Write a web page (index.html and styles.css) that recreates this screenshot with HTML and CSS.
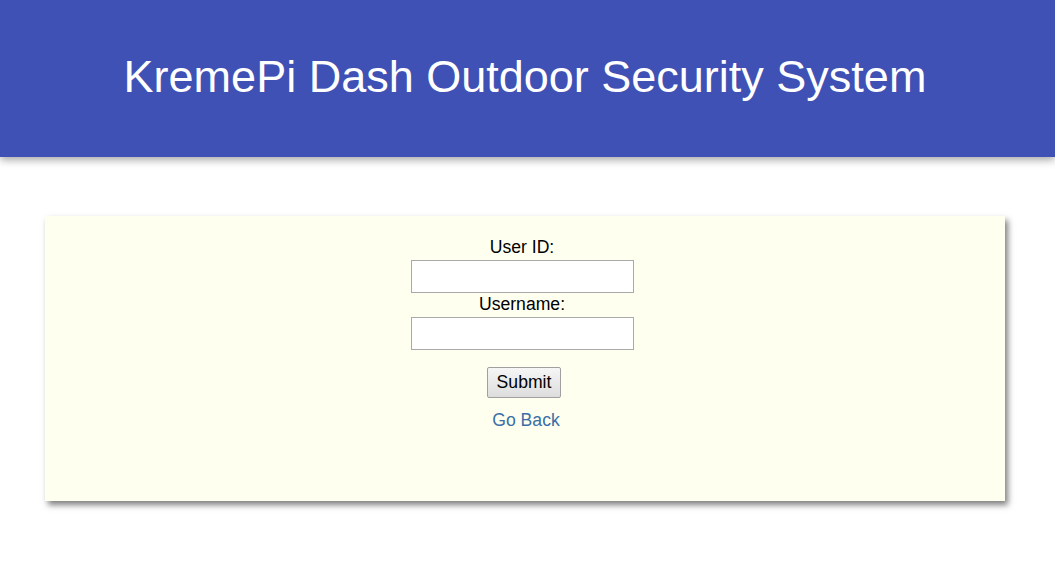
FILE: index.html
```html
<!DOCTYPE html>
<html>
<head>
<meta charset="utf-8">
<link rel="stylesheet" href="styles.css">
</head>
<body>
<header class="topbar">
  <h1 class="title">KremePi Dash Outdoor Security System</h1>
</header>
<main class="content">
  <section class="card">
    <form class="form">
      <label class="label" for="uid">User ID:</label>
      <input class="field" id="uid" type="text">
      <label class="label" for="uname">Username:</label>
      <input class="field" id="uname" type="text">
      <button class="submit" type="button">Submit</button>
      <a class="back" href="#">Go Back</a>
    </form>
  </section>
</main>
</body>
</html>
```
FILE: styles.css
```css
html, body {
  margin: 0;
  padding: 0;
  background: #ffffff;
  font-family: "Liberation Sans", Arial, sans-serif;
}
.topbar {
  background: #3f51b5;
  height: 157px;
  display: flex;
  align-items: center;
  justify-content: center;
  padding-right: 5px;
  box-shadow: 0 3px 8px rgba(0, 0, 0, 0.35);
}
.title {
  margin: 0;
  color: #ffffff;
  font-weight: normal;
  font-size: 45px;
  padding-bottom: 3px;
}
.content {
  padding: 59px 50px 40px 45px;
}
.card {
  background: #fffff0;
  height: 285px;
  box-shadow: 3px 4px 6px rgba(0, 0, 0, 0.5);
  box-sizing: border-box;
  padding-top: 20px;
}
.form {
  display: flex;
  flex-direction: column;
  align-items: center;
  margin-right: 6px;
}
.label {
  font-size: 17.6px;
  color: #000;
  line-height: 22px;
}
.field {
  width: 223px;
  height: 33px;
  box-sizing: border-box;
  border: 1px solid #a9a9a9;
  background: #fff;
  margin: 2px 0 0;
}
.submit {
  margin-top: 17px;
  margin-left: 4px;
  font-family: "Liberation Sans", Arial, sans-serif;
  font-size: 17.6px;
  height: 31px;
  padding: 0 9px;
  border: 1px solid #a0a0a0;
  border-radius: 2px;
  background: linear-gradient(#f6f6f6, #dddddd);
  color: #000;
}
.back {
  margin-top: 12px;
  font-size: 17.6px;
  color: #3a6ea5;
  text-decoration: none;
  margin-left: 8px;
}
```
